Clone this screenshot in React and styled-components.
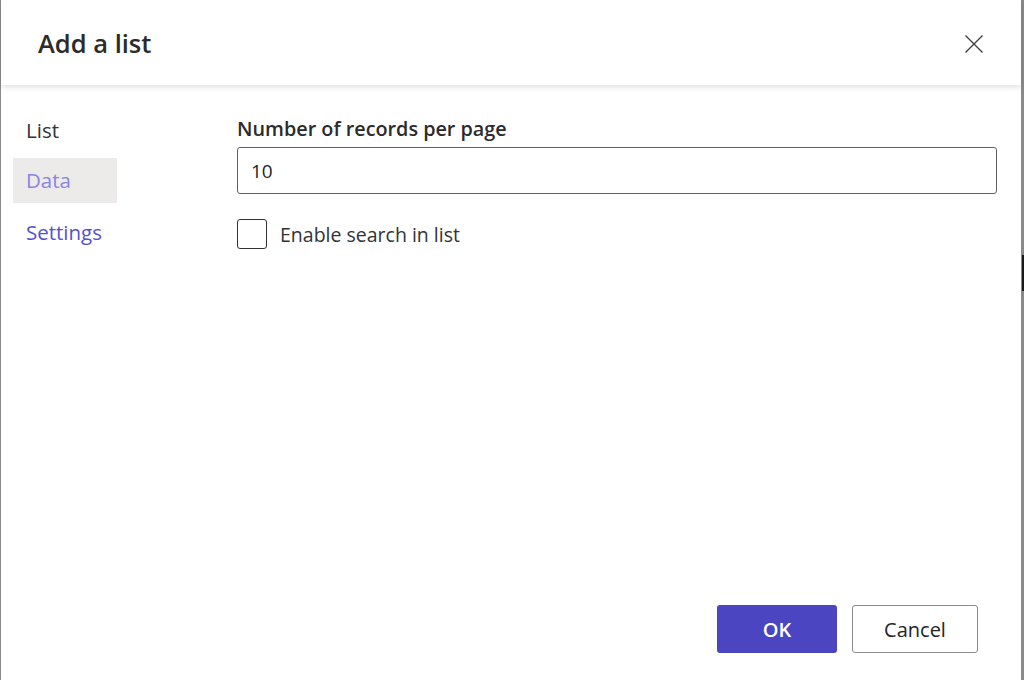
import React, { useState } from 'react';
import styled, { createGlobalStyle } from 'styled-components';

const GlobalStyle = createGlobalStyle`
    html, body {
        margin: 0;
        padding: 0;
        height: 100%;
        overflow: hidden;
    }
    body {
        font-family: "Open Sans", "Noto Sans", "Liberation Sans", sans-serif;
        background: #8a8a8a;
    }
`;

const navItems = ['List', 'Data', 'Settings'];

function CloseIcon() {
    return (
        <svg width='18' height='18' viewBox='0 0 18 18' fill='none'>
            <path d='M0.5 0.5L17.5 17.5M17.5 0.5L0.5 17.5' stroke='#3b3b3b' strokeWidth='1.3' />
        </svg>
    );
}

function App() {
    const [active, setActive] = useState('Data');
    const [records, setRecords] = useState('10');
    const [searchOn, setSearchOn] = useState(false);

    return (
        <>
            <GlobalStyle />
            <Backdrop>
                <Dialog>
                    <Header>
                        <Title>Add a list</Title>
                        <CloseButton aria-label='Close'>
                            <CloseIcon />
                        </CloseButton>
                    </Header>
                    <Body>
                        <Nav>
                            {navItems.map((item) => (
                                <NavItem
                                    key={item}
                                    $active={active === item}
                                    $link={item === 'Settings'}
                                    onClick={() => setActive(item)}
                                >
                                    {item}
                                </NavItem>
                            ))}
                        </Nav>
                        <Content>
                            <FieldLabel>Number of records per page</FieldLabel>
                            <TextInput
                                value={records}
                                onChange={(e) => setRecords(e.target.value)}
                            />
                            <CheckRow onClick={() => setSearchOn(!searchOn)}>
                                <CheckBox $checked={searchOn} />
                                <CheckText>Enable search in list</CheckText>
                            </CheckRow>
                        </Content>
                    </Body>
                    <Footer>
                        <PrimaryButton>OK</PrimaryButton>
                        <SecondaryButton>Cancel</SecondaryButton>
                    </Footer>
                </Dialog>
                <EdgeStrip>
                    <EdgeMark />
                </EdgeStrip>
            </Backdrop>
        </>
    );
}

const Backdrop = styled.div`
    display: flex;
    width: 1024px;
    height: 680px;
    background: #8a8a8a;
`;

const Dialog = styled.div`
    display: flex;
    flex-direction: column;
    width: 1020px;
    height: 680px;
    margin-left: 1px;
    background: #ffffff;
`;

const EdgeStrip = styled.div`
    flex: 1;
    padding-top: 255px;
`;

const EdgeMark = styled.div`
    width: 2px;
    height: 36px;
    margin-left: 1px;
    background: #1a1a1a;
`;

const Header = styled.div`
    display: flex;
    align-items: center;
    justify-content: space-between;
    height: 85px;
    padding: 0 38px 0 37px;
    box-sizing: border-box;
    box-shadow: 0 2px 6px rgba(0, 0, 0, 0.13);
    position: relative;
    z-index: 1;
`;

const Title = styled.h1`
    margin: 0;
    font-size: 25.5px;
    font-weight: 600;
    color: #2b2b2b;
`;

const CloseButton = styled.button`
    display: flex;
    padding: 0;
    margin-top: 2px;
    border: none;
    background: none;
    cursor: pointer;
`;

const Body = styled.div`
    flex: 1;
    display: flex;
    padding: 23px 0 0 12px;
`;

const Nav = styled.div`
    display: flex;
    flex-direction: column;
    gap: 5px;
    width: 104px;
`;

const NavItem = styled.div`
    height: 45px;
    line-height: 45px;
    padding-left: 13px;
    font-size: 20.5px;
    color: ${(p) => (p.$active ? '#8a85e0' : p.$link ? '#5650d0' : '#333333')};
    background: ${(p) => (p.$active ? '#edebe9' : 'transparent')};
    cursor: pointer;

    &:last-child {
        margin-top: 2px;
    }
`;

const Content = styled.div`
    flex: 1;
    display: flex;
    flex-direction: column;
    margin-left: 120px;
    padding-right: 24px;
    padding-top: 7px;
`;

const FieldLabel = styled.label`
    font-size: 19.8px;
    font-weight: 600;
    color: #2b2b2b;
    margin-bottom: 5px;
`;

const TextInput = styled.input`
    height: 47px;
    box-sizing: border-box;
    padding: 0 13px;
    border: 1px solid #616161;
    border-radius: 3px;
    font-family: inherit;
    font-size: 19px;
    color: #242424;
    outline: none;
`;

const CheckRow = styled.div`
    display: flex;
    align-items: center;
    gap: 13px;
    margin-top: 25px;
    cursor: pointer;
`;

const CheckBox = styled.div`
    width: 30px;
    height: 30px;
    box-sizing: border-box;
    border: 1px solid #333333;
    border-radius: 3px;
    background: ${(p) => (p.$checked ? '#4b45c1' : '#ffffff')};
`;

const CheckText = styled.span`
    font-size: 19.5px;
    color: #333333;
`;

const Footer = styled.div`
    display: flex;
    justify-content: flex-end;
    gap: 15px;
    padding: 0 43px 27px 0;
`;

const BaseButton = styled.button`
    height: 48px;
    box-sizing: border-box;
    border-radius: 3px;
    font-family: inherit;
    font-size: 20px;
    cursor: pointer;
`;

const PrimaryButton = styled(BaseButton)`
    width: 120px;
    border: none;
    background: #4b45c1;
    color: #ffffff;
    font-weight: 600;
`;

const SecondaryButton = styled(BaseButton)`
    width: 126px;
    border: 1px solid #8a8a8a;
    background: #ffffff;
    color: #242424;
`;

export default App;
